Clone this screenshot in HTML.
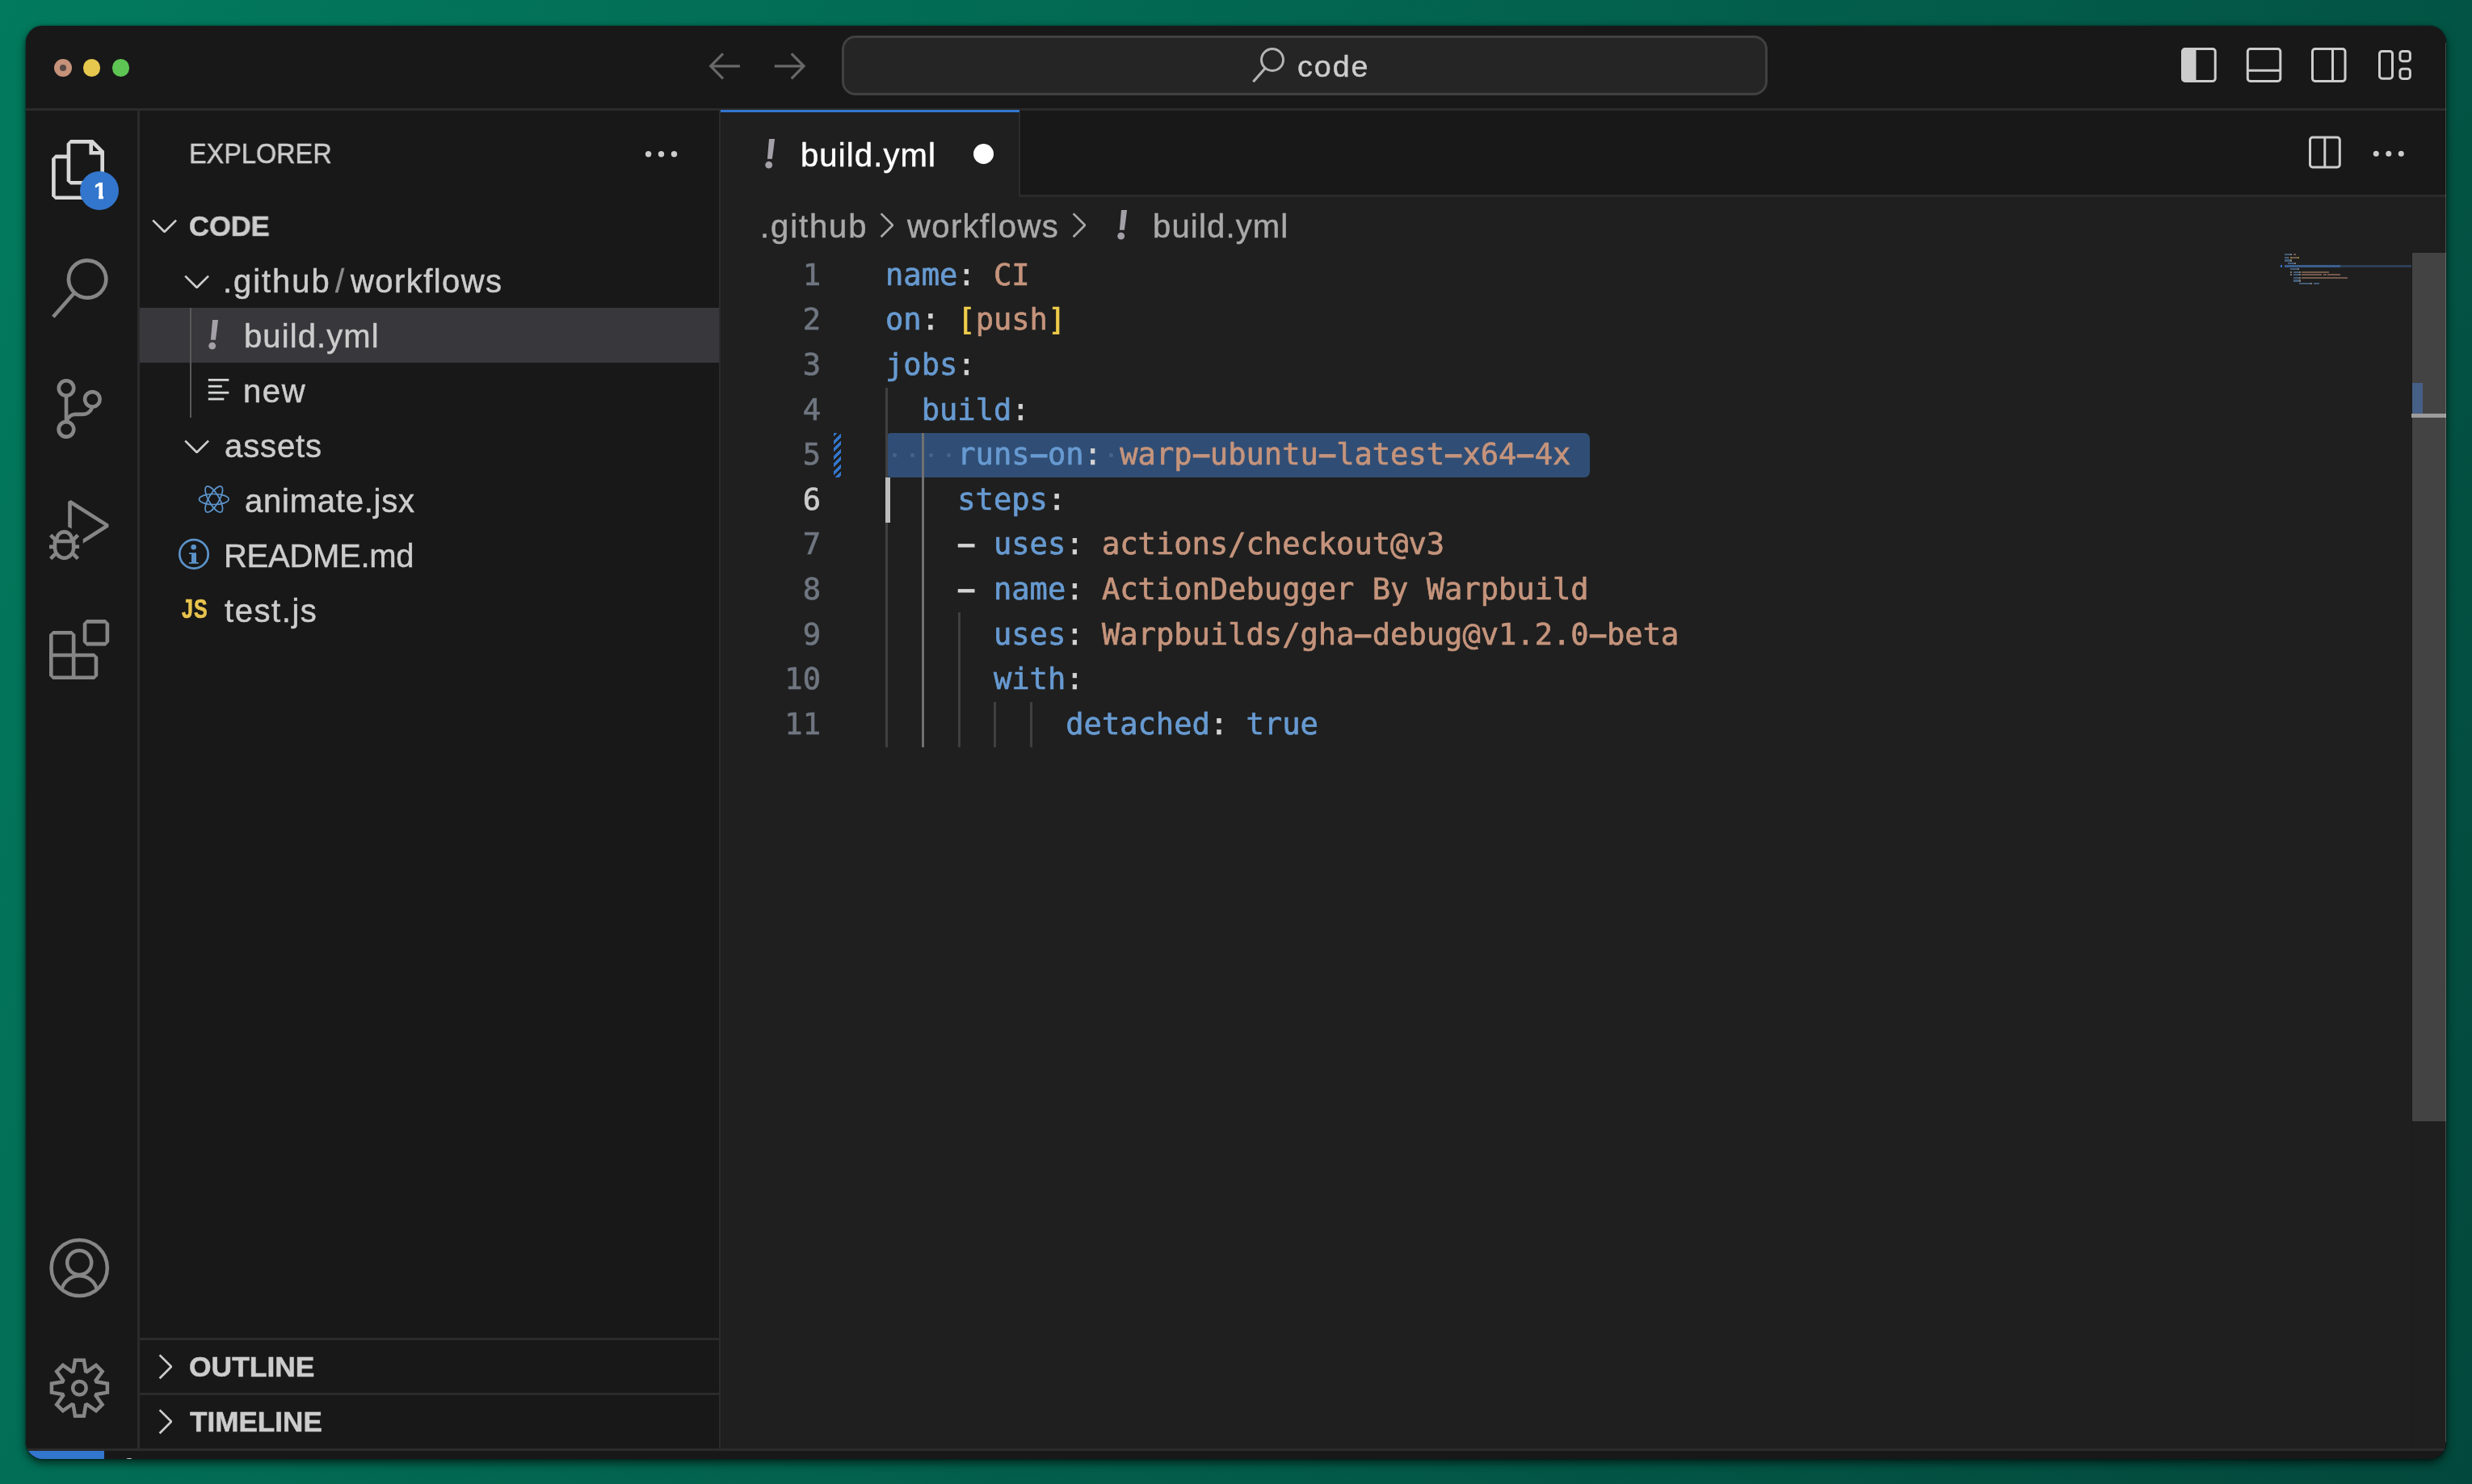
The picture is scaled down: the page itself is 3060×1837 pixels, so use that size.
<!DOCTYPE html>
<html lang="en"><head><meta charset="utf-8"><title>build.yml - code</title>
<style>
html,body{margin:0;padding:0}
html{background:#02614C}
body{width:3060px;height:1837px;overflow:hidden;position:relative;
 font-family:"Liberation Sans",sans-serif;}
#bg{position:absolute;left:0;top:0;width:3060px;height:1837px;
 background:linear-gradient(117.7deg,#027A5D 0%,#03483C 100%)}
#shadow{position:absolute;left:32px;top:32px;width:2996px;height:1774px;border-radius:21px;
 box-shadow:0 5px 11px rgba(0,0,0,.62),0 0 3px rgba(0,0,0,.5);background:#181818}
#win{position:absolute;left:0;top:0;width:3060px;height:1837px;clip-path:inset(32px 32px 31px 32px round 21px);}
#win div,#win svg{position:absolute;display:block}
#win div.t{white-space:pre;will-change:transform;}
.m{font-family:"DejaVu Sans Mono","Liberation Mono",monospace;}
.h{display:inline-block;font-style:normal;transform:scale(2.05,1.15);transform-origin:50% 54.7%}
#win div.t{-webkit-text-stroke:.5px}
#win div.m{-webkit-text-stroke:.7px}
.k{color:#679AD1}.s{color:#C5947C}.p{color:#D4D4D4}.b{color:#F0CD4A}
</style></head><body>
<div id="bg"></div>
<div id="shadow"></div>
<div id="win">
<div style="left:32px;top:32px;width:2996px;height:1774px;background:#181818;"></div>
<div style="left:892px;top:136px;width:2136px;height:1657px;background:#1F1F1F;"></div>
<div style="left:892px;top:136px;width:2136px;height:108px;background:#181818;"></div>
<div style="left:32px;top:134px;width:2996px;height:3px;background:#2B2B2B;"></div>
<div style="left:170px;top:137px;width:2.5px;height:1656px;background:#2B2B2B;"></div>
<div style="left:890px;top:137px;width:2px;height:1656px;background:#2B2B2B;"></div>
<div style="left:892px;top:136px;width:370px;height:108px;background:#1F1F1F;"></div>
<div style="left:892px;top:136px;width:370px;height:3px;background:#3376CD;"></div>
<div style="left:1261px;top:139px;width:2px;height:105px;background:#2B2B2B;"></div>
<div style="left:1262px;top:241px;width:1766px;height:3px;background:#2B2B2B;"></div>
<div style="left:32px;top:1793px;width:2996px;height:3px;background:#2B2B2B;"></div>
<div style="left:32px;top:1796px;width:2996px;height:10px;background:#181818;"></div>
<div style="left:32px;top:1796px;width:97px;height:10px;background:#3376CD;"></div>
<div style="left:67px;top:73px;width:22px;height:22px;background:#C6927A;border-radius:50%"></div>
<div style="left:74.2px;top:80.2px;width:7.6px;height:7.6px;background:#574A45;border-radius:50%"></div>
<div style="left:102.7px;top:73px;width:21.6px;height:21.6px;background:#E6C84F;border-radius:50%"></div>
<div style="left:138.7px;top:73px;width:21.6px;height:21.6px;background:#5EC453;border-radius:50%"></div>
<svg style="left:0px;top:0px;" width="3060" height="140" viewBox="0 0 3060 140"><path d="M915.9 81.8H880.0M895.0 66.3L879.7 81.8L895.0 97.3" fill="none" stroke="#686868" stroke-width="3.2" stroke-linejoin="miter"/><path d="M958.8 81.8H994.7M979.7 66.3L995.0 81.8L979.7 97.3" fill="none" stroke="#686868" stroke-width="3.2" stroke-linejoin="miter"/></svg>
<div style="left:1042px;top:44px;width:1146px;height:74px;background:#252525;box-sizing:border-box;border:3px solid #414141;border-radius:17px"></div>
<svg style="left:1540px;top:50px;" width="70" height="64" viewBox="1540 50 70 64"><circle cx="1575" cy="74" r="13.5" fill="none" stroke="#B4B4B4" stroke-width="3"/><path d="M1566.3 84.3L1551.3 101.2" stroke="#B4B4B4" stroke-width="3.2" fill="none"/></svg>
<div class="t " style="left:1605.90px;top:57.51px;font-size:37.5px;line-height:49px;letter-spacing:2.037px;color:#CCCCCC;">code</div>
<svg style="left:2690px;top:50px;" width="310" height="62" viewBox="2690 50 310 62"><rect x="2701.5" y="60.5" width="40.7" height="40" rx="3.2" fill="none" stroke="#CCCCCC" stroke-width="3"/><path d="M2701.5 64.5a4 4 0 0 1 4-4H2718.5V100.5H2705.5a4 4 0 0 1-4-4z" fill="#CCCCCC"/><rect x="2782.3" y="60.5" width="40.5" height="40" rx="3.2" fill="none" stroke="#CCCCCC" stroke-width="3"/><path d="M2782.3 87.3H2822.8" stroke="#CCCCCC" stroke-width="3"/><rect x="2862.5" y="60.5" width="40.5" height="40" rx="3.2" fill="none" stroke="#CCCCCC" stroke-width="3"/><path d="M2887.5 60.5V100.5" stroke="#CCCCCC" stroke-width="3"/><rect x="2945.5" y="63.4" width="16" height="33.8" rx="3.2" fill="none" stroke="#CCCCCC" stroke-width="3"/><rect x="2970.9" y="63.4" width="12.5" height="12.3" rx="3.2" fill="none" stroke="#CCCCCC" stroke-width="3"/><rect x="2970.9" y="85.2" width="12.5" height="12.3" rx="3.2" fill="none" stroke="#CCCCCC" stroke-width="3"/></svg>
<svg style="left:2850px;top:160px;" width="140" height="60" viewBox="2850 160 140 60"><rect x="2859.5" y="170" width="36.8" height="37" rx="3.2" fill="none" stroke="#CCCCCC" stroke-width="3"/><path d="M2877.8 170V207" stroke="#CCCCCC" stroke-width="3"/><circle cx="2941.3" cy="190.3" r="3.5" fill="#CCCCCC"/><circle cx="2956.8" cy="190.3" r="3.5" fill="#CCCCCC"/><circle cx="2972.3" cy="190.3" r="3.5" fill="#CCCCCC"/></svg>
<svg style="left:61.4px;top:172.7px;" width="74.16" height="74.16" viewBox="0 0 24 24"><path d="M17.5 0h-9L7 1.5V6H2.5L1 7.5v15.07L2.5 24h12.07L16 22.57V18h4.7l1.3-1.43V4.5L17.5 0zm0 2.12l2.38 2.38H17.5V2.12zm-3 20.38h-12v-15H7v9.07L8.5 18h6v4.5zm6-6h-12v-15H16V6h4.5v10.5z" fill="#D7D7D7"/></svg>
<svg style="left:61.4px;top:320.4px;" width="74.16" height="74.16" viewBox="0 0 24 24"><path d="M15.25 0a8.25 8.25 0 0 0-6.18 13.72L1 22.88l1.12 1 8.05-9.12A8.251 8.251 0 1 0 15.25.01V0zm0 15a6.75 6.75 0 1 1 0-13.5 6.75 6.75 0 0 1 0 13.5z" fill="#868686"/></svg>
<svg style="left:61.4px;top:468.7px;" width="74.16" height="74.16" viewBox="0 0 24 24"><path d="M21.007 8.222A3.738 3.738 0 0 0 15.045 5.2a3.737 3.737 0 0 0 1.156 6.583 2.988 2.988 0 0 1-2.668 1.67h-2.99a4.456 4.456 0 0 0-2.989 1.165V7.4a3.737 3.737 0 1 0-1.494 0v9.117a3.776 3.776 0 1 0 1.816.099 2.99 2.99 0 0 1 2.668-1.667h2.99a4.484 4.484 0 0 0 4.223-3.039 3.736 3.736 0 0 0 3.25-3.687zM4.565 3.738a2.242 2.242 0 1 1 4.484 0 2.242 2.242 0 0 1-4.484 0zm4.484 16.441a2.242 2.242 0 1 1-4.484 0 2.242 2.242 0 0 1 4.484 0zm8.221-9.715a2.242 2.242 0 1 1 0-4.485 2.242 2.242 0 0 1 0 4.485z" fill="#868686"/></svg>
<svg style="left:61.4px;top:618.5px;" width="74.16" height="74.16" viewBox="0 0 24 24"><path d="M10.94 13.5l-1.32 1.32a3.73 3.73 0 0 0-7.24 0L1.06 13.5 0 14.56l1.72 1.72-.22.22V18H0v1.5h1.5v.08c.077.489.214.966.41 1.42L0 22.94 1.06 24l1.65-1.65A4.308 4.308 0 0 0 6 24a4.31 4.31 0 0 0 3.29-1.65L10.94 24 12 22.94 10.09 21c.198-.464.336-.951.41-1.45v-.1H12V18h-1.5v-1.5l-.22-.22L12 14.56l-1.06-1.06zM6 13.5a2.25 2.25 0 0 1 2.25 2.25h-4.5A2.25 2.25 0 0 1 6 13.5zm3 6a3.33 3.33 0 0 1-3 3 3.33 3.33 0 0 1-3-3v-2.25h6v2.25zm14.76-9.9v1.26L13.5 17.37V15.6l8.5-5.37L9 2v9.46a5.07 5.07 0 0 0-1.5-.72V.63L8.64 0l15.12 9.6z" fill="#868686"/></svg>
<svg style="left:61.4px;top:766.8px;" width="74.16" height="74.16" viewBox="0 0 24 24"><path d="M13.5 1.5L15 0h7.5L24 1.5V9l-1.5 1.5H15L13.5 9V1.5zm1.5 0V9h7.5V1.5H15zM0 15V6l1.5-1.5H9L10.5 6v7.5H18l1.5 1.5v7.5L18 24H1.5L0 22.5V15zm9-1.5V6H1.5v7.5H9zM9 15H1.5v7.5H9V15zm1.5 7.5H18V15h-7.5v7.5z" fill="#868686"/></svg>
<div style="left:98.7px;top:211.7px;width:48.6px;height:48.6px;background:#3376CD;border-radius:50%"></div>
<div class="t" style="left:115.7px;top:154.8px;font-size:90px;line-height:120px;font-weight:700;color:#FFFFFF;-webkit-text-stroke:1.2px;transform:scale(.32);transform-origin:0 91.2px">1</div>
<div style="left:115.5px;top:242.4px;width:6.8px;height:5px;background:#3376CD;"></div>
<div style="left:127.6px;top:242.4px;width:6px;height:5px;background:#3376CD;"></div>
<svg style="left:55px;top:1525px;" width="90" height="90" viewBox="55 1525 90 90"><circle cx="98.2" cy="1569.5" r="34.6" fill="none" stroke="#868686" stroke-width="4.5"/><circle cx="98.2" cy="1563" r="15" fill="none" stroke="#868686" stroke-width="4.5"/><path d="M76.6 1595.5A22.5 22.5 0 0 1 119.8 1595.5" fill="none" stroke="#868686" stroke-width="4.5"/></svg>
<svg style="left:55px;top:1675px;" width="90" height="90" viewBox="55 1675 90 90"><path d="M90.68 1697.28L92.94 1683.73L103.86 1683.73L106.12 1697.28L107.74 1697.95L118.91 1689.97L126.63 1697.69L118.65 1708.86L119.32 1710.48L132.87 1712.74L132.87 1723.66L119.32 1725.92L118.65 1727.54L126.63 1738.71L118.91 1746.43L107.74 1738.45L106.12 1739.12L103.86 1752.67L92.94 1752.67L90.68 1739.12L89.06 1738.45L77.89 1746.43L70.17 1738.71L78.15 1727.54L77.48 1725.92L63.93 1723.66L63.93 1712.74L77.48 1710.48L78.15 1708.86L70.17 1697.69L77.89 1689.97L89.06 1697.95Z" fill="none" stroke="#868686" stroke-width="4.5" stroke-linejoin="miter"/><circle cx="98.4" cy="1718.2" r="8.3" fill="none" stroke="#868686" stroke-width="4.5"/></svg>
<div class="t " style="left:233.60px;top:167.33px;font-size:35.4px;line-height:46px;letter-spacing:0.000px;color:#CCCCCC;transform:scaleX(0.9167);transform-origin:0 0;">EXPLORER</div>
<svg style="left:790px;top:180px;" width="60" height="22" viewBox="790 180 60 22"><circle cx="802.6" cy="190.8" r="3.7" fill="#CCCCCC"/><circle cx="818.5" cy="190.8" r="3.7" fill="#CCCCCC"/><circle cx="834.5" cy="190.8" r="3.7" fill="#CCCCCC"/></svg>
<div style="left:172.5px;top:381px;width:717.5px;height:68px;background:#37373C;"></div>
<div style="left:234.5px;top:381px;width:2px;height:136px;background:#585858;"></div>
<svg style="left:179px;top:253.5px;" width="49.44" height="49.44" viewBox="0 0 16 16"><path d="M7.976 10.072l4.357-4.357.62.618L8.284 11h-.618L3 6.333l.619-.618 4.357 4.357z" fill="#CCCCCC"/></svg>
<div class="t " style="left:234.22px;top:256.64px;font-size:34.8px;line-height:45px;letter-spacing:0.000px;color:#CCCCCC;font-weight:700;transform:scaleX(0.9919);transform-origin:0 0;">CODE</div>
<svg style="left:219.2px;top:323.2px;" width="49.44" height="49.44" viewBox="0 0 16 16"><path d="M7.976 10.072l4.357-4.357.62.618L8.284 11h-.618L3 6.333l.619-.618 4.357 4.357z" fill="#CCCCCC"/></svg>
<div class="t " style="left:276.30px;top:321.64px;font-size:40px;line-height:52px;letter-spacing:1.933px;color:#CCCCCC;">.github</div>
<div class="t " style="left:414.50px;top:321.64px;font-size:40px;line-height:52px;letter-spacing:0.000px;color:#8B8B8B;">/</div>
<div class="t " style="left:433.90px;top:321.64px;font-size:40px;line-height:52px;letter-spacing:1.425px;color:#CCCCCC;">workflows</div>
<svg style="left:255px;top:394.1px;" width="20" height="42" viewBox="255.0 394.1 20 42"><path d="M263.0 396.1L270.1 396.1L266.9 420.8L260.9 420.8Z" fill="#A4A0A8"/><circle cx="262.7" cy="428.3" r="4.4" fill="#A4A0A8"/></svg>
<div class="t " style="left:302.20px;top:389.74px;font-size:40px;line-height:52px;letter-spacing:1.100px;color:#CCCCCC;">build.yml</div>
<svg style="left:255px;top:465px;" width="32" height="34" viewBox="255 465 32 34"><rect x="257.8" y="468.9" width="25.5" height="2.8" fill="#D4D7D6"/><rect x="257.8" y="476.8" width="17" height="2.8" fill="#D4D7D6"/><rect x="257.8" y="484.7" width="25.5" height="2.8" fill="#D4D7D6"/><rect x="257.8" y="492.6" width="19.5" height="2.8" fill="#D4D7D6"/></svg>
<div class="t " style="left:301.40px;top:457.84px;font-size:40px;line-height:52px;letter-spacing:1.600px;color:#CCCCCC;">new</div>
<svg style="left:219.2px;top:527.28px;" width="49.44" height="49.44" viewBox="0 0 16 16"><path d="M7.976 10.072l4.357-4.357.62.618L8.284 11h-.618L3 6.333l.619-.618 4.357 4.357z" fill="#CCCCCC"/></svg>
<div class="t " style="left:277.70px;top:525.74px;font-size:40px;line-height:52px;letter-spacing:0.900px;color:#CCCCCC;">assets</div>
<svg style="left:244px;top:598px;" width="42" height="42" viewBox="244 598 42 42"><ellipse cx="264.8" cy="618" rx="18.3" ry="6.5" fill="none" stroke="#5B94CB" stroke-width="1.7" transform="rotate(0 264.8 618)"/><ellipse cx="264.8" cy="618" rx="18.3" ry="6.5" fill="none" stroke="#5B94CB" stroke-width="1.7" transform="rotate(60 264.8 618)"/><ellipse cx="264.8" cy="618" rx="18.3" ry="6.5" fill="none" stroke="#5B94CB" stroke-width="1.7" transform="rotate(120 264.8 618)"/></svg>
<div class="t " style="left:302.60px;top:593.74px;font-size:40px;line-height:52px;letter-spacing:0.770px;color:#CCCCCC;">animate.jsx</div>
<svg style="left:218px;top:664px;" width="45" height="45" viewBox="218 664 45 45"><circle cx="240" cy="685.9" r="17.7" fill="none" stroke="#5B93C9" stroke-width="2.7"/><circle cx="239.7" cy="677.3" r="3.3" fill="#5B93C9"/><path d="M234 684.3h9v11.8h2.8v1.7h-11.8v-1.7h3v-10.2h-3z" fill="#5B93C9"/></svg>
<div class="t " style="left:277.30px;top:661.84px;font-size:40px;line-height:52px;letter-spacing:-0.288px;color:#CCCCCC;">README.md</div>
<div class="t " style="left:224.62px;top:740.04px;font-size:25px;line-height:32px;letter-spacing:1.050px;color:#E8C44E;font-weight:700;transform:scaleY(1.31);transform-origin:50% 25.2px;">JS</div>
<div class="t " style="left:277.80px;top:729.74px;font-size:40px;line-height:52px;letter-spacing:1.567px;color:#CCCCCC;">test.js</div>
<div style="left:172.5px;top:1656px;width:717.5px;height:3px;background:#2B2B2B;"></div>
<div style="left:172.5px;top:1724px;width:717.5px;height:3px;background:#2B2B2B;"></div>
<svg style="left:179.1px;top:1666.78px;" width="49.44" height="49.44" viewBox="0 0 16 16"><path d="M10.072 8.024L5.715 3.667l.618-.62L11 7.716v.618L6.333 13l-.618-.619 4.357-4.357z" fill="#CCCCCC"/></svg>
<div class="t " style="left:233.88px;top:1669.47px;font-size:35px;line-height:46px;letter-spacing:0.000px;color:#CCCCCC;font-weight:700;transform:scaleX(1.0123);transform-origin:0 0;">OUTLINE</div>
<svg style="left:179.1px;top:1734.88px;" width="49.44" height="49.44" viewBox="0 0 16 16"><path d="M10.072 8.024L5.715 3.667l.618-.62L11 7.716v.618L6.333 13l-.618-.619 4.357-4.357z" fill="#CCCCCC"/></svg>
<div class="t " style="left:234.95px;top:1737.27px;font-size:35px;line-height:46px;letter-spacing:0.000px;color:#CCCCCC;font-weight:700;transform:scaleX(1.0031);transform-origin:0 0;">TIMELINE</div>
<svg style="left:944.1px;top:170px;" width="20" height="42" viewBox="944.1 170.0 20 42"><path d="M952.1 172.0L959.2 172.0L956.0 196.7L950.0 196.7Z" fill="#A4A0A8"/><circle cx="951.8" cy="204.2" r="4.4" fill="#A4A0A8"/></svg>
<div class="t " style="left:991.40px;top:165.74px;font-size:40px;line-height:52px;letter-spacing:1.125px;color:#FFFFFF;">build.yml</div>
<div style="left:1205px;top:177.8px;width:25px;height:25px;background:#FFFFFF;border-radius:50%"></div>
<div class="t " style="left:941.30px;top:253.74px;font-size:40px;line-height:52px;letter-spacing:1.883px;color:#A9A9A9;">.github</div>
<svg style="left:1072.3px;top:253.7px;" width="49.44" height="49.44" viewBox="0 0 16 16"><path d="M10.072 8.024L5.715 3.667l.618-.62L11 7.716v.618L6.333 13l-.618-.619 4.357-4.357z" fill="#A9A9A9"/></svg>
<div class="t " style="left:1123.30px;top:253.74px;font-size:40px;line-height:52px;letter-spacing:1.387px;color:#A9A9A9;">workflows</div>
<svg style="left:1309.64px;top:253.7px;" width="49.44" height="49.44" viewBox="0 0 16 16"><path d="M10.072 8.024L5.715 3.667l.618-.62L11 7.716v.618L6.333 13l-.618-.619 4.357-4.357z" fill="#A9A9A9"/></svg>
<svg style="left:1380.3px;top:258.1px;" width="20" height="42" viewBox="1380.3 258.1 20 42"><path d="M1388.3 260.1L1395.4 260.1L1392.2 284.8L1386.2 284.8Z" fill="#A4A0A8"/><circle cx="1388.0" cy="292.3" r="4.4" fill="#A4A0A8"/></svg>
<div class="t " style="left:1426.90px;top:253.94px;font-size:40px;line-height:52px;letter-spacing:1.175px;color:#A9A9A9;">build.yml</div>
<div style="left:1096.4px;top:535.8px;width:871.6px;height:55.6px;background:#304E75;border-radius:7px"></div>
<div style="left:1105.07px;top:561.1px;width:5px;height:5px;background:#48638A;border-radius:50%"></div>
<div style="left:1127.4px;top:561.1px;width:5px;height:5px;background:#48638A;border-radius:50%"></div>
<div style="left:1149.74px;top:561.1px;width:5px;height:5px;background:#48638A;border-radius:50%"></div>
<div style="left:1172.07px;top:561.1px;width:5px;height:5px;background:#48638A;border-radius:50%"></div>
<div style="left:1373.09px;top:561.1px;width:5px;height:5px;background:#48638A;border-radius:50%"></div>
<div style="left:1096.4px;top:480.2px;width:3px;height:56.1px;background:#404040;"></div>
<div style="left:1096.4px;top:535.8px;width:3px;height:56.1px;background:#404040;"></div>
<div style="left:1141.07px;top:535.8px;width:3px;height:56.1px;background:#707070;"></div>
<div style="left:1141.07px;top:591.4px;width:3px;height:56.1px;background:#707070;"></div>
<div style="left:1096.4px;top:647px;width:3px;height:56.1px;background:#404040;"></div>
<div style="left:1141.07px;top:647px;width:3px;height:56.1px;background:#707070;"></div>
<div style="left:1096.4px;top:702.6px;width:3px;height:56.1px;background:#404040;"></div>
<div style="left:1141.07px;top:702.6px;width:3px;height:56.1px;background:#707070;"></div>
<div style="left:1096.4px;top:758.2px;width:3px;height:56.1px;background:#404040;"></div>
<div style="left:1141.07px;top:758.2px;width:3px;height:56.1px;background:#707070;"></div>
<div style="left:1185.74px;top:758.2px;width:3px;height:56.1px;background:#404040;"></div>
<div style="left:1096.4px;top:813.8px;width:3px;height:56.1px;background:#404040;"></div>
<div style="left:1141.07px;top:813.8px;width:3px;height:56.1px;background:#707070;"></div>
<div style="left:1185.74px;top:813.8px;width:3px;height:56.1px;background:#404040;"></div>
<div style="left:1096.4px;top:869.4px;width:3px;height:56.1px;background:#404040;"></div>
<div style="left:1141.07px;top:869.4px;width:3px;height:56.1px;background:#707070;"></div>
<div style="left:1185.74px;top:869.4px;width:3px;height:56.1px;background:#404040;"></div>
<div style="left:1230.41px;top:869.4px;width:3px;height:56.1px;background:#404040;"></div>
<div style="left:1275.08px;top:869.4px;width:3px;height:56.1px;background:#404040;"></div>
<div style="left:1096px;top:591.4px;width:6px;height:55.6px;background:#BDBDBD;"></div>
<div style="left:1032px;top:535.8px;width:9px;height:55.6px;background:repeating-linear-gradient(135deg,#3376CD 0 3.4px,transparent 3.4px 6.7px);"></div>
<div class="t m" style="left:916.3px;width:100px;text-align:right;top:312.80px;height:55.6px;line-height:55.6px;font-size:37.1px;color:#6F7680">1</div>
<div class="t m" style="left:916.3px;width:100px;text-align:right;top:368.40px;height:55.6px;line-height:55.6px;font-size:37.1px;color:#6F7680">2</div>
<div class="t m" style="left:916.3px;width:100px;text-align:right;top:424.00px;height:55.6px;line-height:55.6px;font-size:37.1px;color:#6F7680">3</div>
<div class="t m" style="left:916.3px;width:100px;text-align:right;top:479.60px;height:55.6px;line-height:55.6px;font-size:37.1px;color:#6F7680">4</div>
<div class="t m" style="left:916.3px;width:100px;text-align:right;top:535.20px;height:55.6px;line-height:55.6px;font-size:37.1px;color:#6F7680">5</div>
<div class="t m" style="left:916.3px;width:100px;text-align:right;top:590.80px;height:55.6px;line-height:55.6px;font-size:37.1px;color:#CCCCCC">6</div>
<div class="t m" style="left:916.3px;width:100px;text-align:right;top:646.40px;height:55.6px;line-height:55.6px;font-size:37.1px;color:#6F7680">7</div>
<div class="t m" style="left:916.3px;width:100px;text-align:right;top:702.00px;height:55.6px;line-height:55.6px;font-size:37.1px;color:#6F7680">8</div>
<div class="t m" style="left:916.3px;width:100px;text-align:right;top:757.60px;height:55.6px;line-height:55.6px;font-size:37.1px;color:#6F7680">9</div>
<div class="t m" style="left:916.3px;width:100px;text-align:right;top:813.20px;height:55.6px;line-height:55.6px;font-size:37.1px;color:#6F7680">10</div>
<div class="t m" style="left:916.3px;width:100px;text-align:right;top:868.80px;height:55.6px;line-height:55.6px;font-size:37.1px;color:#6F7680">11</div>
<div class="t m" style="left:1096.4px;top:312.80px;height:55.6px;line-height:55.6px;font-size:37.1px;color:#D4D4D4"><span class="k">name</span><span class="p">: </span><span class="s">CI</span></div>
<div class="t m" style="left:1096.4px;top:368.40px;height:55.6px;line-height:55.6px;font-size:37.1px;color:#D4D4D4"><span class="k">on</span><span class="p">: </span><span class="b">[</span><span class="s">push</span><span class="b">]</span></div>
<div class="t m" style="left:1096.4px;top:424.00px;height:55.6px;line-height:55.6px;font-size:37.1px;color:#D4D4D4"><span class="k">jobs</span><span class="p">:</span></div>
<div class="t m" style="left:1096.4px;top:479.60px;height:55.6px;line-height:55.6px;font-size:37.1px;color:#D4D4D4">  <span class="k">build</span><span class="p">:</span></div>
<div class="t m" style="left:1096.4px;top:535.20px;height:55.6px;line-height:55.6px;font-size:37.1px;color:#D4D4D4">    <span class="k">runs<i class="h">-</i>on</span><span class="p">: </span><span class="s">warp<i class="h">-</i>ubuntu<i class="h">-</i>latest<i class="h">-</i>x64<i class="h">-</i>4x</span></div>
<div class="t m" style="left:1096.4px;top:590.80px;height:55.6px;line-height:55.6px;font-size:37.1px;color:#D4D4D4">    <span class="k">steps</span><span class="p">:</span></div>
<div class="t m" style="left:1096.4px;top:646.40px;height:55.6px;line-height:55.6px;font-size:37.1px;color:#D4D4D4">    <span class="p"><i class="h">-</i> </span><span class="k">uses</span><span class="p">: </span><span class="s">actions/checkout@v3</span></div>
<div class="t m" style="left:1096.4px;top:702.00px;height:55.6px;line-height:55.6px;font-size:37.1px;color:#D4D4D4">    <span class="p"><i class="h">-</i> </span><span class="k">name</span><span class="p">: </span><span class="s">ActionDebugger By Warpbuild</span></div>
<div class="t m" style="left:1096.4px;top:757.60px;height:55.6px;line-height:55.6px;font-size:37.1px;color:#D4D4D4">      <span class="k">uses</span><span class="p">: </span><span class="s">Warpbuilds/gha<i class="h">-</i>debug@v1.2.0<i class="h">-</i>beta</span></div>
<div class="t m" style="left:1096.4px;top:813.20px;height:55.6px;line-height:55.6px;font-size:37.1px;color:#D4D4D4">      <span class="k">with</span><span class="p">:</span></div>
<div class="t m" style="left:1096.4px;top:868.80px;height:55.6px;line-height:55.6px;font-size:37.1px;color:#D4D4D4">          <span class="k">detached</span><span class="p">: </span><span class="k">true</span></div>
<div style="left:2985px;top:313px;width:43px;height:1075px;background:#434343;"></div>
<div style="left:2985px;top:313px;width:1px;height:1480px;background:#1A1A1A;"></div>
<div style="left:2986px;top:473.6px;width:13px;height:38.4px;background:#465F86;"></div>
<div style="left:2985px;top:512px;width:43px;height:5.4px;background:#9C9C9C;"></div>
<div style="left:2828px;top:327.58px;width:68.5px;height:3.8px;background:#3B5E8D;"></div>
<div style="left:2896.5px;top:327.58px;width:88.5px;height:3.8px;background:rgba(59,94,141,.5);"></div>
<div style="left:2822.5px;top:327.58px;width:2.6px;height:3.8px;background:#3376CD;"></div>
<div style="left:2828px;top:314.2px;width:7.12px;height:2.3px;background:#679AD1;opacity:.5"></div>
<div style="left:2835.12px;top:314.2px;width:1.78px;height:2.3px;background:#D4D4D4;opacity:.5"></div>
<div style="left:2838.68px;top:314.2px;width:3.56px;height:2.3px;background:#C5947C;opacity:.5"></div>
<div style="left:2828px;top:317.77px;width:3.56px;height:2.3px;background:#679AD1;opacity:.5"></div>
<div style="left:2831.56px;top:317.77px;width:1.78px;height:2.3px;background:#D4D4D4;opacity:.5"></div>
<div style="left:2835.12px;top:317.77px;width:1.78px;height:2.3px;background:#F9D849;opacity:.5"></div>
<div style="left:2836.9px;top:317.77px;width:7.12px;height:2.3px;background:#C5947C;opacity:.5"></div>
<div style="left:2844.02px;top:317.77px;width:1.78px;height:2.3px;background:#F9D849;opacity:.5"></div>
<div style="left:2828px;top:321.34px;width:7.12px;height:2.3px;background:#679AD1;opacity:.5"></div>
<div style="left:2835.12px;top:321.34px;width:1.78px;height:2.3px;background:#D4D4D4;opacity:.5"></div>
<div style="left:2831.56px;top:324.91px;width:8.9px;height:2.3px;background:#679AD1;opacity:.5"></div>
<div style="left:2840.46px;top:324.91px;width:1.78px;height:2.3px;background:#D4D4D4;opacity:.5"></div>
<div style="left:2835.12px;top:332.05px;width:8.9px;height:2.3px;background:#679AD1;opacity:.5"></div>
<div style="left:2844.02px;top:332.05px;width:1.78px;height:2.3px;background:#D4D4D4;opacity:.5"></div>
<div style="left:2835.12px;top:335.62px;width:1.78px;height:2.3px;background:#D4D4D4;opacity:.5"></div>
<div style="left:2838.68px;top:335.62px;width:7.12px;height:2.3px;background:#679AD1;opacity:.5"></div>
<div style="left:2845.8px;top:335.62px;width:1.78px;height:2.3px;background:#D4D4D4;opacity:.5"></div>
<div style="left:2849.36px;top:335.62px;width:33.82px;height:2.3px;background:#C5947C;opacity:.5"></div>
<div style="left:2835.12px;top:339.19px;width:1.78px;height:2.3px;background:#D4D4D4;opacity:.5"></div>
<div style="left:2838.68px;top:339.19px;width:7.12px;height:2.3px;background:#679AD1;opacity:.5"></div>
<div style="left:2845.8px;top:339.19px;width:1.78px;height:2.3px;background:#D4D4D4;opacity:.5"></div>
<div style="left:2849.36px;top:339.19px;width:24.92px;height:2.3px;background:#C5947C;opacity:.5"></div>
<div style="left:2876.06px;top:339.19px;width:3.56px;height:2.3px;background:#C5947C;opacity:.5"></div>
<div style="left:2881.4px;top:339.19px;width:16.02px;height:2.3px;background:#C5947C;opacity:.5"></div>
<div style="left:2838.68px;top:342.76px;width:7.12px;height:2.3px;background:#679AD1;opacity:.5"></div>
<div style="left:2845.8px;top:342.76px;width:1.78px;height:2.3px;background:#D4D4D4;opacity:.5"></div>
<div style="left:2849.36px;top:342.76px;width:56.96px;height:2.3px;background:#C5947C;opacity:.5"></div>
<div style="left:2838.68px;top:346.33px;width:7.12px;height:2.3px;background:#679AD1;opacity:.5"></div>
<div style="left:2845.8px;top:346.33px;width:1.78px;height:2.3px;background:#D4D4D4;opacity:.5"></div>
<div style="left:2845.8px;top:349.9px;width:14.24px;height:2.3px;background:#679AD1;opacity:.5"></div>
<div style="left:2860.04px;top:349.9px;width:1.78px;height:2.3px;background:#D4D4D4;opacity:.5"></div>
<div style="left:2863.6px;top:349.9px;width:7.12px;height:2.3px;background:#679AD1;opacity:.5"></div>
<div style="left:3026.8px;top:53px;width:1.2px;height:1732px;background:rgba(255,255,255,.2);"></div>
<div style="left:156.3px;top:1804.5px;width:7.4px;height:4px;background:#CFCFCF;border-radius:50%"></div>
</div>
</body></html>
